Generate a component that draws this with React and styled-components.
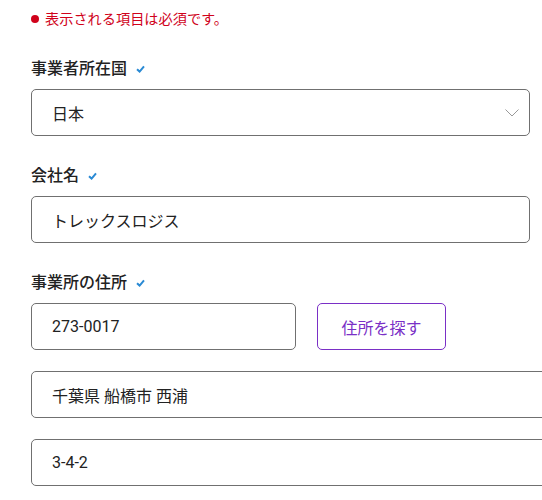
import styled, { createGlobalStyle } from 'styled-components'

const GlobalStyle = createGlobalStyle`
  html, body {
    margin: 0;
    padding: 0;
    background: #fff;
    overflow: hidden;
  }
  body {
    font-family: Roboto, "Noto Sans CJK JP", sans-serif;
    color: #222;
  }
`

const Form = styled.div`
  padding: 9px 0 0 31px;
  display: flex;
  flex-direction: column;
`

const Notice = styled.p`
  margin: 0 0 28px;
  display: flex;
  align-items: center;
  gap: 6px;
  font-size: 14.2px;
  line-height: 20px;
  color: #d0021b;
`

const Dot = styled.span`
  width: 8px;
  height: 8px;
  border-radius: 50%;
  background: #d0021b;
`

const Field = styled.div`
  display: flex;
  flex-direction: column;
  gap: 8px;
  margin-bottom: 28px;
`

const Label = styled.label`
  display: flex;
  align-items: center;
  gap: 9px;
  font-size: 16px;
  font-weight: 500;
  line-height: 24px;
  color: #222;
`

const Box = styled.div`
  box-sizing: border-box;
  width: ${p => p.$width || '499px'};
  height: 47px;
  border: 1px solid #707070;
  border-radius: 5px;
  display: flex;
  align-items: center;
  justify-content: space-between;
  padding: 0 10px 0 20px;
  font-size: 16px;
  color: #222;
  flex-shrink: 0;
`

const Row = styled.div`
  display: flex;
  gap: 21px;
`

const Stack = styled.div`
  display: flex;
  flex-direction: column;
  gap: 21px;
`

const SearchButton = styled.button`
  box-sizing: border-box;
  width: 129px;
  height: 47px;
  border: 1px solid #7a2fc6;
  border-radius: 5px;
  background: #fff;
  color: #7a2fc6;
  font-family: inherit;
  font-size: 16px;
  padding: 0;
`

const Check = () => (
  <svg width="9" height="8" viewBox="0 0 9 8">
    <path d="M1 4.2 L3.6 6.6 L8 1.4" fill="none" stroke="#2a8ad4" strokeWidth="2" />
  </svg>
)

const Chevron = () => (
  <svg width="14" height="8" viewBox="0 0 14 8">
    <path d="M0.5 0.5 L7 7 L13.5 0.5" fill="none" stroke="#999" strokeWidth="1" />
  </svg>
)

export default function App() {
  return (
    <>
      <GlobalStyle />
      <Form>
        <Notice><Dot />表示される項目は必須です。</Notice>

        <Field>
          <Label>事業者所在国<Check /></Label>
          <Box>日本<Chevron /></Box>
        </Field>

        <Field>
          <Label>会社名<Check /></Label>
          <Box>トレックスロジス</Box>
        </Field>

        <Field>
          <Label>事業所の住所<Check /></Label>
          <Stack>
            <Row>
              <Box $width="265px">273-0017</Box>
              <SearchButton>住所を探す</SearchButton>
            </Row>
            <Box $width="540px">千葉県 船橋市 西浦</Box>
            <Box $width="540px">3-4-2</Box>
          </Stack>
        </Field>
      </Form>
    </>
  )
}
